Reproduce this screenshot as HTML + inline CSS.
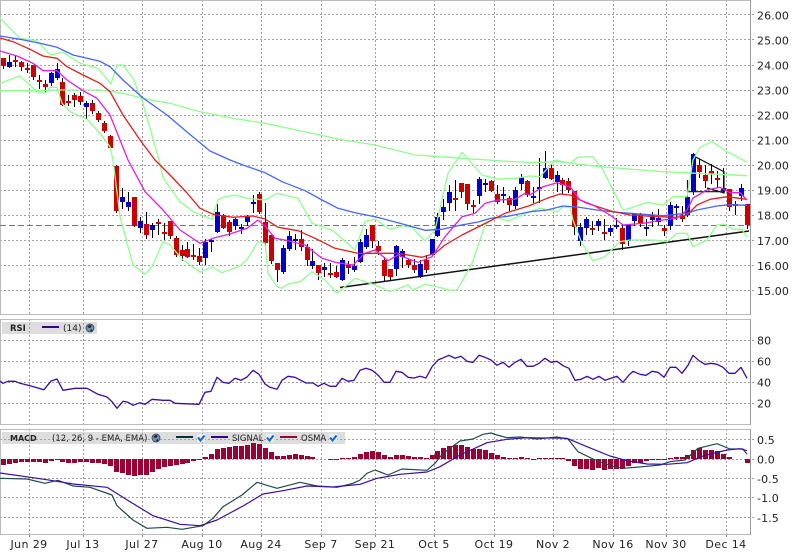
<!DOCTYPE html>
<html><head><meta charset="utf-8"><title>Chart</title>
<style>html,body{margin:0;padding:0;background:#fff;width:796px;height:558px;overflow:hidden}svg{display:block;font-family:"DejaVu Sans","Liberation Sans",sans-serif;fill:#222}</style></head>
<body>
<svg width="796" height="558" viewBox="0 0 796 558" xmlns="http://www.w3.org/2000/svg">
<rect width="796" height="558" fill="#fff"/>
<!-- legend boxes -->
<rect x="2" y="322" width="95" height="12" fill="#ddd"/>
<rect x="2" y="432" width="343" height="12" fill="#ddd"/>
<!-- grid -->
<g fill="none" stroke="#a0a0a0" stroke-width="1" stroke-dasharray="2 2" shape-rendering="crispEdges">
<path d="M0 14.5H754M0 39.5H754M0 65.5H754M0 90.5H754M0 115.5H754M0 140.5H754M0 165.5H754M0 190.5H754M0 215.5H754M0 240.5H754M0 265.5H754M0 290.5H754"/>
<path d="M29.5 0V314M83.5 0V314M142.5 0V314M202.5 0V314M261.5 0V314M321.5 0V314M375.5 0V314M434.5 0V314M494.5 0V314M553.5 0V314M613.5 0V314M666.5 0V314M726.5 0V314"/>
<path d="M0 340.5H754M0 361.5H754M0 382.5H754M0 403.5H754"/>
<path d="M29.5 319V424M83.5 319V424M142.5 319V424M202.5 319V424M261.5 319V424M321.5 319V424M375.5 319V424M434.5 319V424M494.5 319V424M553.5 319V424M613.5 319V424M666.5 319V424M726.5 319V424"/>
<path d="M0 439.5H754M0 459.5H754M0 478.5H754M0 497.5H754M0 517.5H754"/>
<path d="M29.5 429V534M83.5 429V534M142.5 429V534M202.5 429V534M261.5 429V534M321.5 429V534M375.5 429V534M434.5 429V534M494.5 429V534M553.5 429V534M613.5 429V534M666.5 429V534M726.5 429V534"/>
</g>
<!-- borders -->
<g fill="none" stroke="#bbb" stroke-width="1" shape-rendering="crispEdges">
<path d="M0.5 314V0.5H750M0 314.5H750"/>
<path d="M0.5 424V319.5H750M0 424.5H750"/>
<path d="M0.5 534V429.5H750M0 534.5H750"/>
<path d="M29.5 535V537M83.5 535V537M142.5 535V537M202.5 535V537M261.5 535V537M321.5 535V537M375.5 535V537M434.5 535V537M494.5 535V537M553.5 535V537M613.5 535V537M666.5 535V537M726.5 535V537" stroke="#888"/>
</g>
<path d="M750.5 0V315M750.5 319V425M750.5 429V535" stroke="#999" fill="none" shape-rendering="crispEdges"/>
<!-- last price line -->
<path d="M0 225.5H750" stroke="#777" stroke-dasharray="6 3" fill="none" shape-rendering="crispEdges"/>
<!-- candle wicks -->
<path fill="none" stroke="#000" stroke-width="1" shape-rendering="crispEdges" d="M3.5 58V69M9.5 55V68M15.5 55V67M21.5 61V71M27.5 63V73M33.5 65V80M39.5 75V89M45.5 80V92M51.5 72V86M57.5 63V80M62.5 78V106M68.5 95V106M74.5 93V107M80.5 92V105M86.5 101V119M92.5 100V114M98.5 111V122M104.5 121V133M110.5 135V149M116.5 165V213M122.5 188V209M128.5 192V211M134.5 197V227M140.5 217V233M146.5 212V239M152.5 223V238M158.5 219V235M164.5 223V240M170.5 221V239M176.5 236V257M182.5 245V261M187.5 242V258M193.5 244V260M199.5 248V265M205.5 239V265M211.5 239V252M217.5 204V233M223.5 214V229M229.5 220V236M235.5 217V230M241.5 224V234M247.5 215V226M253.5 195V213M259.5 192V214M265.5 203V248M271.5 235V264M277.5 263V282M283.5 245V274M289.5 231V251M295.5 234V250M301.5 230V251M307.5 244V266M312.5 249V269M318.5 265V280M324.5 263V277M330.5 263V278M336.5 266V278M342.5 258V281M348.5 261V274M354.5 257V272M360.5 239V263M366.5 229V249M372.5 225V248M378.5 241V255M384.5 257V282M390.5 269V280M396.5 245V276M402.5 249V268M408.5 259V268M414.5 259V273M420.5 260V278M426.5 255V273M432.5 239V256M437.5 213V237M443.5 199V220M449.5 185V211M455.5 180V211M461.5 183V198M467.5 184V210M473.5 200V213M479.5 177V204M485.5 179V192M491.5 180V192M497.5 185V204M503.5 187V203M509.5 196V211M515.5 187V209M521.5 174V190M527.5 180V197M533.5 187V203M539.5 158V203M545.5 151V179M551.5 164V180M557.5 171V192M562.5 178V194M568.5 178V193M574.5 191V235M580.5 223V246M586.5 217V235M592.5 221V235M598.5 219V231M604.5 219V240M610.5 225V236M616.5 218V229M622.5 224V250M628.5 224V246M634.5 213V226M640.5 213V227M646.5 219V236M652.5 212V227M658.5 209V225M664.5 225V236M670.5 202V230M676.5 204V220M682.5 206V222M687.5 192V217M693.5 153V195M699.5 159V178M705.5 165V188M711.5 164V184M717.5 171V188M723.5 168V193M729.5 189V211M735.5 201V215M741.5 184V201M747.5 204V229"/>
<!-- red bodies -->
<path fill="none" stroke="#cc0000" stroke-width="5" shape-rendering="crispEdges" d="M3.5 58V66M15.5 60V62M21.5 62V67M27.5 68V70M33.5 65V77M39.5 80V82M45.5 84V87M62.5 82V105M68.5 101V103M74.5 95V100M80.5 96V102M92.5 103V111M98.5 113V120M104.5 123V131M110.5 136V148M116.5 166V211M134.5 197V226M146.5 224V235M158.5 222V224M164.5 232V234M170.5 221V236M176.5 238V255M182.5 250V256M187.5 249V257M193.5 255V257M199.5 256V262M223.5 215V228M229.5 222V232M259.5 194V212M265.5 222V243M271.5 235V261M277.5 263V270M301.5 239V247M307.5 247V260M318.5 265V273M330.5 273V275M336.5 272V277M348.5 265V268M372.5 225V241M378.5 246V251M384.5 260V276M390.5 269V277M408.5 260V265M414.5 265V270M426.5 260V270M455.5 198V200M461.5 183V192M467.5 184V204M473.5 205V207M491.5 181V191M497.5 194V202M509.5 198V205M527.5 181V195M551.5 168V179M562.5 180V185M568.5 181V190M574.5 191V227M592.5 228V230M604.5 232V234M622.5 228V244M640.5 214V223M664.5 228V231M682.5 216V219M699.5 165V172M705.5 175V181M711.5 171V174M717.5 178V180M729.5 189V207M735.5 204V206M747.5 204V225"/>
<!-- blue bodies -->
<path fill="none" stroke="#0000cc" stroke-width="5" shape-rendering="crispEdges" d="M9.5 62V67M51.5 73V83M57.5 69V78M86.5 103V107M122.5 197V202M128.5 202V207M140.5 221V228M152.5 225V230M205.5 242V258M211.5 240V242M217.5 212V232M235.5 219V226M241.5 227V229M247.5 217V222M253.5 202V204M283.5 248V272M289.5 236V249M295.5 239V241M312.5 261V266M324.5 267V270M342.5 260V280M354.5 266V270M360.5 242V262M366.5 235V247M396.5 246V269M402.5 251V257M420.5 264V276M432.5 239V255M437.5 217V236M443.5 207V212M449.5 192V203M479.5 179V196M485.5 183V185M503.5 194V196M515.5 190V206M521.5 177V184M533.5 196V198M539.5 187V189M545.5 168V178M557.5 175V182M580.5 227V241M586.5 219V228M598.5 221V226M610.5 228V232M616.5 225V227M628.5 225V241M634.5 214V221M646.5 227V229M652.5 215V220M658.5 218V222M670.5 205V226M676.5 206V208M687.5 197V215M693.5 154V192M723.5 188V191M741.5 188V196"/>
<!-- trend drawings -->
<g fill="none" stroke="#111" stroke-width="1.2">
<path d="M340 287.5L749 231" stroke-width="1.5"/>
<path d="M695 156.7L724 171.7V193L707 188M687 191.7H725M687.5 192V180"/>
</g>
<!-- overlays -->
<g fill="none" stroke-width="1.3" stroke-linejoin="round">
<polyline stroke="#90ff90" points="0,90.7 33,90.7 60,90 100,90 123,93.3 147,99.3 170,103.3 200,111.7 233,118.3 265,123.3 343,140 375,145 415,155 462,158.3 530,162.7 557,161.7 580,164.3 600,166.7 663,171.7 747,175.7"/>
<polyline stroke="#90ff90" points="0,18.3 20,38.3 37,40.7 50,55 63,52.3 80,63.3 98,68.3 111,84 117,65 123,65 133,78.3 143,103.3 159,160 163,178 180,201.7 193,211.7 212,219.3 218,200 223,197.3 235,195 247,198.3 265,200 277,193.3 298,198.3 312,223.3 332,230 355,250 365,221.7 375,219 390,229.3 402,226 412,227.3 425,241 435,230 448,173.3 462,152.3 482,175 498,179.3 515,178.3 530,176 540,176.7 555,160 570,163.3 578,157.3 593,156.7 603,170 623,210 630,208.3 647,202.3 663,205 673,196.7 687,196.7 693,160 700,147.3 712,141.7 727,151.7 737,156.7 747,162.3"/>
<polyline stroke="#90ff90" points="0,83.3 20,76 37,91.7 45,93.3 50,87.3 57,87.3 62,103.3 70,111.7 87,119.3 100,133.3 110,146.7 113,160 120,216.7 133,265 145,274.3 152,266.7 163,241.7 170,245 183,260 200,272.3 212,266.7 222,272.7 240,266 248,258.3 258,241.7 265,243.3 268,273 277,286.7 282,288.3 288,284 300,281.7 312,271.7 325,280 337,293.3 355,278.3 375,285 390,291.7 408,285 413,290 425,284.3 435,286 448,290 457,290 472,263.3 485,225 495,217.3 508,221 530,211.7 540,208.3 557,211.7 563,206.7 570,207.3 573,220 582,243.3 593,260.7 605,256.7 613,248.3 620,241.7 630,240 653,240 667,241.7 677,233.3 687,233.3 693,246.7 707,240 717,225 725,224.3 733,229.3 742,229.3 747,236.7"/>
<polyline stroke="#4466ff" points="0,36 20,39.3 40,43.3 57,47.3 73,55 100,61.3 110,66.7 123,80 143,98 167,115 187,132 210,151 230,160 243,165 265,172.7 282,181.7 305,190.7 322,200 338,208.3 355,212.7 375,216.7 398,222.7 425,230.3 442,229.3 458,225.7 478,222 492,218 508,216.3 530,211.7 547,210 563,206 577,207 597,210 617,212.3 640,214 663,215.7 687,213.3 697,210 717,206 730,204.7 747,205.3"/>
<polyline stroke="#e02020" points="0,38 13,41.7 30,49.3 43,56 57,58.3 67,66.7 83,75 100,83.3 110,91.7 123,115 140,140 155,160 170,175 187,193 200,208.3 213,214.3 233,217.3 253,216 265,219 278,227.3 298,230.7 315,238.3 335,248.3 358,253.3 375,253.3 398,253.3 422,257.3 435,253.3 445,245 462,235 482,225 505,213.3 530,205.5 547,198.3 560,194 570,195 587,203.3 610,210.7 630,215 657,216.7 677,217.3 687,215 697,205 710,199.3 727,196.7 747,199.3"/>
<polyline stroke="#e020e0" points="0,51 17,56 33,63.3 43,70.7 57,70.7 67,80 83,90.7 97,98.3 110,115 128,160 145,191.7 163,210 180,230 200,243.3 213,238.3 230,234 247,228.3 258,220 265,226 275,238.3 288,240.7 305,245 322,258.3 337,262.7 353,265 365,253.3 375,250 388,260.7 398,255 418,262.3 432,256.7 445,236.7 462,216.7 475,213.3 485,203.3 498,200 515,199.3 525,193.3 530,195 543,186.7 557,182.7 570,186.7 580,200 593,205 610,215 623,225 643,223.3 663,220 677,218.3 687,210 693,198 707,190 720,187.3 730,192.7 740,192.7 747,200"/>
<!-- RSI -->
<polyline stroke="#3a0ca8" points="0,381 3,383.3 8,381.3 15,381.3 20,383.3 30,385.7 44,389.7 51,381 57,379 63,390.3 75,388.3 87,388.3 98,394.3 107,397 112,401.7 117,408.3 123,401.3 128,402.3 133,405.3 140,402.7 145,404.3 152,399.3 163,400.3 170,400.3 175,403.3 199,404.3 205,392.3 211,391.3 217,377.3 223,382.3 229,383.3 235,378.3 241,380.3 247,377 253,370.3 259,374.3 265,384 270,387.3 277,389.3 282,380.3 288,376.3 295,377.3 306,383 313,383 318,386.3 324,383.3 330,386.3 336,386.3 342,378.3 348,381.3 354,380.3 360,370.3 366,368.3 372,370.3 378,375 384,382.3 390,382.3 396,371.3 402,372.3 408,377.3 414,378 420,376.3 426,378 432,366.7 438,360 449,355.3 455,358.3 461,356.3 467,361.3 473,362.3 479,355.3 485,357.3 491,360 497,365.3 503,362.3 509,367.3 515,362.3 521,359.3 527,366.3 533,366.3 539,363.3 545,358.3 551,362.3 557,361.3 563,365.7 569,368.3 575,380.3 581,379.3 587,376.3 593,379.3 599,376.3 605,380.3 611,378.3 617,376.3 623,382.3 629,375 633,371.3 640,374.3 646,375.3 652,371.3 658,372.3 664,377.3 670,367.3 676,367.3 682,373.3 688,365.3 693,355.3 699,360.7 705,364.3 711,363.3 717,364.3 723,367.3 729,373.3 735,373.3 741,367.3 747,378.3"/>
</g>
<!-- OSMA bars -->
<path fill="none" stroke="#990033" stroke-width="5" shape-rendering="crispEdges" d="M3.5 459V465M9.5 459V464M15.5 459V463M21.5 459V462M27.5 459V462M33.5 459V462M39.5 459V462M45.5 459V463M51.5 459V461M57.5 459V460M62.5 459V462M68.5 459V463M74.5 459V463M80.5 459V462M86.5 459V462M92.5 459V463M98.5 459V463M104.5 459V464M110.5 459V466M116.5 459V472M122.5 459V473M128.5 459V475M134.5 459V476M140.5 459V475M146.5 459V475M152.5 459V472M158.5 459V469M164.5 459V467M170.5 459V466M176.5 459V465M182.5 459V464M187.5 459V463M193.5 459V461M199.5 459V460M205.5 459V457M211.5 459V454M217.5 459V449M223.5 459V448M229.5 459V447M235.5 459V446M241.5 459V446M247.5 459V445M253.5 459V443M259.5 459V444M265.5 459V448M271.5 459V452M277.5 459V456M283.5 459V456M289.5 459V455M295.5 459V454M301.5 459V455M307.5 459V456M312.5 459V457M330.5 459V460M336.5 459V460M342.5 459V458M348.5 459V458M354.5 459V457M360.5 459V454M366.5 459V452M372.5 459V451M378.5 459V452M384.5 459V455M390.5 459V457M396.5 459V455M402.5 459V455M408.5 459V456M414.5 459V457M420.5 459V457M426.5 459V458M432.5 459V455M437.5 459V451M443.5 459V448M449.5 459V446M455.5 459V445M461.5 459V445M467.5 459V447M473.5 459V449M479.5 459V449M485.5 459V450M491.5 459V453M497.5 459V455M503.5 459V457M509.5 459V458M515.5 459V458M521.5 459V457M527.5 459V458M533.5 459V460M539.5 458V459M545.5 458V459M551.5 458V459M557.5 458V459M562.5 458V459M568.5 459V461M574.5 459V466M580.5 459V469M586.5 459V469M592.5 459V470M598.5 459V468M604.5 459V470M610.5 459V469M616.5 459V469M622.5 459V469M628.5 459V466M634.5 459V463M640.5 459V463M646.5 459V461M652.5 459V460M658.5 459V460M664.5 459V460M670.5 458V459M676.5 459V457M682.5 459V457M687.5 459V455M693.5 459V450M699.5 459V448M705.5 459V450M711.5 459V450M717.5 459V451M723.5 459V454M729.5 459V457M747.5 459V463"/>
<g fill="none" stroke-width="1.2" stroke-linejoin="round">
<polyline stroke="#1f4a4a" points="0,478.3 27,479 45,483.3 58,480.3 73,486 90,487.3 112,495 117,505.7 133,520 147,528.3 167,527.3 182,529.3 203,525.7 213,518.3 223,506.7 242,495 257,482.3 277,488.3 300,482.3 317,486 337,487.3 353,483.3 360,480 367,473.3 375,470 388,475 402,469 427,470.3 435,463.3 443,453.3 460,441 473,439 483,434.3 491,433 497,435 507,437.7 520,437 537,439 557,437 568,439 578,451.7 593,459 613,466.7 623,468.3 643,466.7 660,465 670,461.7 685,460 698,448.3 717,443.7 730,449 743,449 747,454.3"/>
<polyline stroke="#3a0ca8" points="0,473 33,477.7 53,480.7 73,484 107,487.3 130,501.7 153,515.7 180,524.3 200,525.7 217,520 243,506 263,494 283,490.7 307,486 333,487 360,484.3 377,478.3 400,474.3 427,472 440,466.7 460,455 487,442.7 507,439.3 527,437.7 567,438.3 587,446.7 610,456 627,460.7 647,464 667,464.3 687,462.7 703,456 727,450 740,448.7 747,450.7"/>
</g>
<!-- axis labels -->
<g font-size="11" letter-spacing="0.1">
<text x="757" y="19.5">26.00</text><text x="757" y="44.5">25.00</text><text x="757" y="69.5">24.00</text><text x="757" y="94.5">23.00</text><text x="757" y="119.5">22.00</text><text x="757" y="144.5">21.00</text><text x="757" y="169.5">20.00</text><text x="757" y="194.5">19.00</text><text x="757" y="219.5">18.00</text><text x="757" y="245">17.00</text><text x="757" y="270">16.00</text><text x="757" y="295">15.00</text>
<text x="757" y="344.5">80</text><text x="757" y="365.5">60</text><text x="757" y="386.5">40</text><text x="757" y="407.5">20</text>
<text x="757" y="444">0.5</text><text x="757" y="463.5">0.0</text><text x="757" y="483">-0.5</text><text x="757" y="502">-1.0</text><text x="757" y="522">-1.5</text>
</g>
<g font-size="11" text-anchor="middle" letter-spacing="0.4">
<text x="29" y="548">Jun 29</text><text x="83" y="548">Jul 13</text><text x="142" y="548">Jul 27</text><text x="202" y="548">Aug 10</text><text x="261" y="548">Aug 24</text><text x="321" y="548">Sep 7</text><text x="375" y="548">Sep 21</text><text x="434" y="548">Oct 5</text><text x="494" y="548">Oct 19</text><text x="553" y="548">Nov 2</text><text x="613" y="548">Nov 16</text><text x="666" y="548">Nov 30</text><text x="726" y="548">Dec 14</text>
</g>
<!-- legends -->
<g font-size="8.5">
<text x="10" y="331" font-weight="bold" font-size="8.5">RSI</text>
<path d="M42 327H59" stroke="#330099" stroke-width="2"/>
<text x="63" y="331" font-size="9">(14)</text>
<text x="10" y="441" font-weight="bold" font-size="8">MACD</text>
<text x="52" y="441">(12, 26, 9 - EMA, EMA)</text>
<path d="M176 437H193" stroke="#003333" stroke-width="2"/>
<path d="M211 437H228" stroke="#330099" stroke-width="2"/>
<text x="232" y="441">SIGNAL</text>
<path d="M280 437H297" stroke="#990033" stroke-width="2"/>
<text x="301" y="441">OSMA</text>
</g>
<!-- globes -->
<g>
<circle cx="90" cy="328" r="4" fill="#6a93b8" stroke="#334" stroke-width="0.7"/>
<path d="M87.5 326.5a3 3 0 0 1 4-1l-.5 2-2 .5zM90 330l2 -1 .5 1.5-1.5 1z" fill="#223"/>
<circle cx="156" cy="438" r="4" fill="#6a93b8" stroke="#334" stroke-width="0.7"/>
<path d="M153.5 436.5a3 3 0 0 1 4-1l-.5 2-2 .5zM156 440l2 -1 .5 1.5-1.5 1z" fill="#223"/>
</g>
<!-- check icons -->
<g fill="#e8eef5" stroke="none">
<rect x="197" y="434" width="8" height="8"/><rect x="266" y="434" width="8" height="8"/><rect x="329" y="434" width="8" height="8"/>
</g>
<g fill="none" stroke="#1166cc" stroke-width="2">
<path d="M198 437.5l2.5 3 4-5"/><path d="M267 437.5l2.5 3 4-5"/><path d="M330 437.5l2.5 3 4-5"/>
</g>
</svg>
</body></html>
